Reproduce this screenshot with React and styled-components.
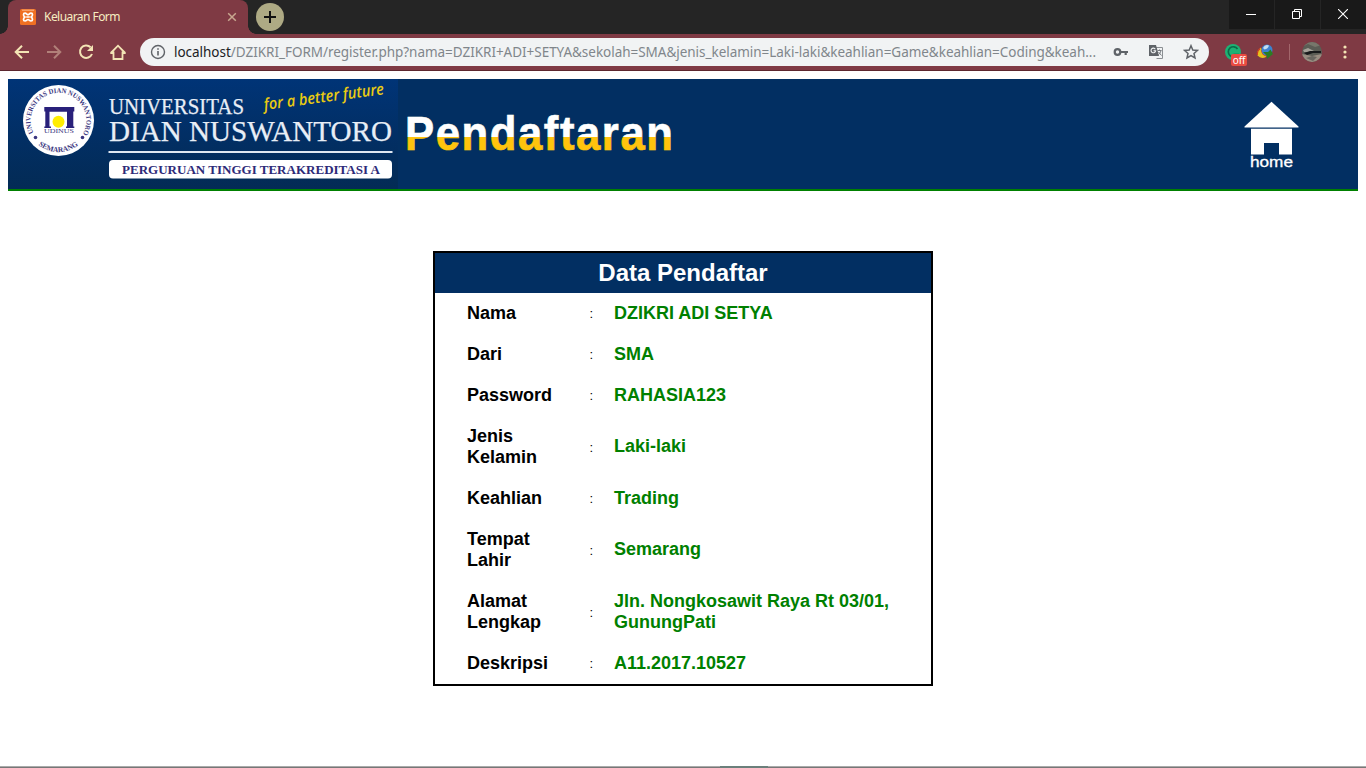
import React from "react";
import styled, { createGlobalStyle } from "styled-components";

const ui = `"Noto Sans", "Open Sans", sans-serif`;
const arial = `"Liberation Sans", Arial, sans-serif`;

const GlobalStyle = createGlobalStyle`
  * { box-sizing: border-box; }
  html, body { margin: 0; padding: 0; background: #fff; overflow: hidden; }
`;

const Window = styled.div`
  width: 1366px;
  height: 768px;
  display: flex;
  flex-direction: column;
  font-family: ${ui};
`;

const TabStrip = styled.div`
  height: 34px;
  flex: none;
  display: flex;
  align-items: flex-start;
  background: #252525;
  padding-left: 8px;
`;

const Tab = styled.div`
  width: 240px;
  height: 34px;
  position: relative;
  display: flex;
  align-items: center;
  padding: 0 11px 0 12px;
  background: #7f3a44;
  border-radius: 8px 8px 0 0;
  &::before, &::after {
    content: "";
    position: absolute;
    bottom: 0;
    width: 8px;
    height: 8px;
  }
  &::before { left: -8px; background: radial-gradient(circle at 0 0, transparent 7.5px, #7f3a44 8px); }
  &::after { right: -8px; background: radial-gradient(circle at 100% 0, transparent 7.5px, #7f3a44 8px); }
`;

const TabTitle = styled.span`
  flex: 1;
  margin-left: 8px;
  padding-bottom: 1px;
  font-size: 12px;
  letter-spacing: -0.55px;
  color: #f6ecc0;
  white-space: nowrap;
`;

const NewTab = styled.div`
  width: 28px;
  height: 28px;
  margin: 3px 0 0 8px;
  border-radius: 50%;
  background: #aeaa84;
  display: flex;
  align-items: center;
  justify-content: center;
`;

const Controls = styled.div`
  margin-left: auto;
  display: flex;
  gap: 1px;
`;

const Control = styled.div`
  width: 45px;
  height: 29px;
  padding: 0 1px 1px 0;
  background: #191919;
  display: flex;
  align-items: center;
  justify-content: center;
`;

const Toolbar = styled.div`
  height: 37px;
  flex: none;
  display: flex;
  align-items: center;
  background: #7f3a44;
  border-bottom: 1px solid #5c2730;
  padding: 0 19px 0 12px;
`;

const NavIcons = styled.div`
  display: flex;
  gap: 12px;
  width: 128px;
  svg { display: block; }
`;

const Omnibox = styled.div`
  width: 1069px;
  height: 28px;
  border-radius: 14px;
  background: #f1f3f4;
  display: flex;
  align-items: center;
  padding: 0 10px 0 9px;
`;

const Url = styled.div`
  width: 926px;
  margin-left: 7px;
  font-size: 13.5px;
  letter-spacing: -0.03px;
  white-space: nowrap;
  color: #80868b;
  b { font-weight: 400; color: #202124; }
`;

const BoxIcons = styled.div`
  margin-left: auto;
  display: flex;
  align-items: center;
  gap: 19px;
  svg { display: block; }
`;

const Extensions = styled.div`
  flex: 1;
  display: flex;
  align-items: center;
  margin-left: 15px;
  svg { display: block; }
`;

const ExtIcon = styled.div`
  position: relative;
  width: 18px;
  height: 18px;
  margin-right: 14px;
`;

const OffBadge = styled.span`
  position: absolute;
  left: 7px;
  top: 11px;
  width: 16px;
  height: 12px;
  border-radius: 2px;
  background: #ea4b41;
  color: #fff;
  font: 10px/12px ${ui};
  letter-spacing: -0.2px;
  text-align: center;
`;

const Divider = styled.div`
  width: 1px;
  height: 16px;
  margin: 0 12px 0 15px;
  background: #a2666b;
`;

const MenuIcon = styled.svg`
  margin-left: auto;
`;

const Page = styled.main`
  flex: 1;
  padding: 8px 8px 0;
  background: #fff;
  display: flex;
  flex-direction: column;
`;

const Header = styled.header`
  height: 112px;
  flex: none;
  display: flex;
  background: #022f62;
  border-bottom: 2px solid #008000;
  svg { display: block; overflow: visible; }
`;

const HomeLink = styled.a`
  margin-left: auto;
  margin-right: 56px;
`;

const Card = styled.section`
  width: 500px;
  margin: 60px auto 0;
  border: 2px solid #000;
  font-family: ${arial};
`;

const CardTitle = styled.h2`
  margin: 0;
  height: 40px;
  background: #022f62;
  color: #fff;
  font-size: 24px;
  line-height: 40px;
  text-align: center;
`;

const Row = styled.div`
  display: grid;
  grid-template-columns: 122px 25px 290px;
  align-items: center;
  padding: 10px 0 10px 32px;
  line-height: 21px;
`;

const Label = styled.div`
  width: 90px;
  font-size: 18px;
  font-weight: 700;
  color: #000;
`;

const Colon = styled.div`
  padding-left: 0.5px;
  font-size: 13px;
  color: #000;
`;

const Value = styled(Label)`
  width: auto;
  margin-top: -0.6px;
  color: #008000;
`;

const Taskbar = styled.div`
  height: 2px;
  flex: none;
  display: flex;
  justify-content: center;
  background: linear-gradient(#aaa 50%, #777 50%);
`;

const TaskbarActive = styled.div`
  width: 48px;
  margin-left: 122px;
  background: #6b7f7b;
`;

const rows = [
  ["Nama", "DZIKRI ADI SETYA"],
  ["Dari", "SMA"],
  ["Password", "RAHASIA123"],
  ["Jenis Kelamin", "Laki-laki"],
  ["Keahlian", "Trading"],
  ["Tempat Lahir", "Semarang"],
  ["Alamat Lengkap", "Jln. Nongkosawit Raya Rt 03/01, GunungPati"],
  ["Deskripsi", "A11.2017.10527"],
];

const XamppIcon = () => (
  <svg width="16" height="16" viewBox="0 0 16 16">
    <rect width="16" height="16" rx="1.500" fill="#f07023" />
    <path d="M2 1.200h12" stroke="#f9b88c" strokeWidth="1" />
    <path d="M5 4.200C3 4.200 3 7 5 8C3 9 3 12 5 12C6.500 12 7 10.500 8 10.500S9.500 12 11 12C13 12 13 9 11 8C13 7 13 4.200 11 4.200C9.500 4.200 9 5.700 8 5.700S6.500 4.200 5 4.200ZM6.200 8h3.600" fill="none" stroke="#fff" strokeWidth="1.700" strokeLinejoin="round" />
  </svg>
);

const NavBar = () => (
  <NavIcons>
    <svg width="20" height="20" viewBox="0 0 20 20" fill="none" stroke="#f3e4b5" strokeWidth="2"><path d="M17 10H4.500M10 3.700L3.700 10L10 16.300" /></svg>
    <svg width="20" height="20" viewBox="0 0 20 20" fill="none" stroke="#b18079" strokeWidth="2"><path d="M3 10H15.500M10 3.700L16.300 10L10 16.300" /></svg>
    <svg width="20" height="20" viewBox="0 0 20 20" fill="none" stroke="#f3e4b5" strokeWidth="2"><path d="M14.600 5.300A6.200 6.200 0 1 0 16 12" /><path d="M17 3V9H11Z" fill="#f3e4b5" stroke="none" /></svg>
    <svg width="20" height="20" viewBox="0 0 20 20" fill="none" stroke="#f3e4b5" strokeWidth="1.800"><path d="M5.500 9.500V17H14.500V9.500M2.300 11H5.500M14.500 11H17.700M2.800 11L10 3.700L17.200 11" /></svg>
  </NavIcons>
);

const UniversityLogo = () => (
  <svg width="390" height="110" viewBox="8 79 390 110">
    <defs>
      <linearGradient id="logoBg" x1="0" y1="0" x2="0" y2="1">
        <stop offset="0" stopColor="#003477" />
        <stop offset="0.5" stopColor="#022f65" />
        <stop offset="1" stopColor="#032b55" />
      </linearGradient>
      <path id="sealTop" d="M33.600 133A27.800 27.800 0 1 1 83.400 133" />
      <path id="sealBottom" d="M34.800 141.400A31.700 31.700 0 0 0 82.200 141.400" />
    </defs>
    <rect x="8" y="79" width="390" height="110" fill="url(#logoBg)" />
    <circle cx="58.500" cy="120.500" r="35.500" fill="#fff" />
    <g fill="#3a3680" fontFamily="Liberation Serif, serif" fontWeight="700">
      <text fontSize="7"><textPath href="#sealTop" textLength="114" lengthAdjust="spacingAndGlyphs">UNIVERSITAS DIAN NUSWANTORO</textPath></text>
      <text fontSize="7.500"><textPath href="#sealBottom" startOffset="5" textLength="43" lengthAdjust="spacing">SEMARANG</textPath></text>
      <text x="44" y="133.300" fontSize="6" fontWeight="400" textLength="30" lengthAdjust="spacingAndGlyphs">UDINUS</text>
      <circle cx="35.500" cy="137.500" r="1.800" />
      <circle cx="82.500" cy="137.500" r="1.800" />
    </g>
    <path d="M44.300 107H74.300V111.500H73.300V126.500H74.300V128H66V126.500H67V111.800H49.500V126.500H51V128H44.300V126.500H45.300V111.500H44.300Z" fill="#29207a" />
    <circle cx="58.500" cy="121.800" r="6" fill="#ffed00" />
    <g fill="#e8eef6" stroke="#e8eef6" strokeWidth="0.250" fontFamily="Liberation Serif, serif">
      <text x="109" y="114" fontSize="22.500" textLength="135" lengthAdjust="spacingAndGlyphs">UNIVERSITAS</text>
      <text x="109" y="140.500" fontSize="29.500" textLength="283" lengthAdjust="spacingAndGlyphs">DIAN NUSWANTORO</text>
    </g>
    <text transform="translate(264.500 110) rotate(-7.500)" fontFamily="Open Sans, sans-serif" fontStyle="italic" fontWeight="600" fontSize="16" fill="#e9cb12" textLength="121" lengthAdjust="spacingAndGlyphs">for a better future</text>
    <rect x="108.500" y="151" width="284" height="2" fill="#dfe7f1" />
    <rect x="109" y="160" width="283" height="18.500" rx="4" fill="#fff" />
    <text x="122" y="174" fontFamily="Liberation Serif, serif" fontWeight="700" fontSize="13" fill="#2d2a78" textLength="258" lengthAdjust="spacingAndGlyphs">PERGURUAN TINGGI TERAKREDITASI A</text>
  </svg>
);

const Wordmark = () => (
  <svg width="290" height="110" viewBox="398 79 290 110">
    <defs>
      <linearGradient id="split" gradientUnits="userSpaceOnUse" x1="0" y1="-70.500" x2="0" y2="39.500">
        <stop offset="0.527" stopColor="#fff" />
        <stop offset="0.527" stopColor="#ffc40d" />
      </linearGradient>
    </defs>
    <text transform="translate(405 149.500) scale(0.890 1)" fontFamily="Liberation Sans, sans-serif" fontWeight="700" fontSize="49" fill="url(#split)" stroke="url(#split)" strokeWidth="0.700" textLength="301" lengthAdjust="spacing">Pendaftaran</text>
  </svg>
);

const HomeIcon = () => (
  <svg width="58" height="110" viewBox="1244 79 58 110">
    <path d="M1271.500 101.700L1298.500 126.500V127.500H1244.500V126.500Z" fill="#fff" />
    <path d="M1251 128.700H1292V154.500H1279V143H1264V154.500H1251Z" fill="#fff" />
    <text x="1250" y="166.500" fontFamily="Liberation Sans, sans-serif" fontSize="15" fill="#fff" stroke="#fff" strokeWidth="0.300" textLength="43" lengthAdjust="spacingAndGlyphs">home</text>
  </svg>
);

export default function App() {
  return (
    <Window>
      <GlobalStyle />
      <TabStrip>
        <Tab>
          <XamppIcon />
          <TabTitle>Keluaran Form</TabTitle>
          <svg width="10" height="10" viewBox="0 0 10 10" stroke="#c8a890" strokeWidth="1.500"><path d="M1.200 1.200L8.800 8.800M8.800 1.200L1.200 8.800" /></svg>
        </Tab>
        <NewTab>
          <svg width="12" height="12" viewBox="0 0 12 12" stroke="#111" strokeWidth="2"><path d="M0 6H12M6 0V12" /></svg>
        </NewTab>
        <Controls>
          <Control><svg width="10" height="10" viewBox="0 0 10 10"><path d="M0 5.500H10" stroke="#fff" /></svg></Control>
          <Control><svg width="10" height="10" viewBox="0 0 10 10" fill="none" stroke="#fff"><path d="M.5 2.500H7.500V9.500H.5ZM2.500 2.500V.5H9.500V7.500H7.500" /></svg></Control>
          <Control><svg width="10" height="10" viewBox="0 0 10 10" stroke="#fff" strokeWidth="1.100"><path d="M0 0L10 10M10 0L0 10" /></svg></Control>
        </Controls>
      </TabStrip>
      <Toolbar>
        <NavBar />
        <Omnibox>
          <svg width="18" height="18" viewBox="0 0 18 18"><circle cx="9" cy="9" r="6.500" fill="none" stroke="#5f6368" strokeWidth="1.400" /><path d="M9 8V12.500M9 5.200V6.800" stroke="#5f6368" strokeWidth="1.600" /></svg>
          <Url><b>localhost</b>/DZIKRI_FORM/register.php?nama=DZIKRI+ADI+SETYA&amp;sekolah=SMA&amp;jenis_kelamin=Laki-laki&amp;keahlian=Game&amp;keahlian=Coding&amp;keah...</Url>
          <BoxIcons>
            <svg width="16" height="16" viewBox="0 0 16 16" fill="none" stroke="#5f6368" strokeWidth="2.200"><circle cx="4.500" cy="8" r="2.800" /><path d="M7 8H15M12.700 8V11" /></svg>
            <svg width="16" height="16" viewBox="0 0 16 16"><path d="M6 3.500H14.500V14.500H8.500" fill="none" stroke="#8b8f93" /><path d="M1 1H8L11 12H1Z" fill="#5f6368" /><path d="M7.300 5.200A2.300 2.300 0 1 0 7.600 6.800H5.500" fill="none" stroke="#f1f3f4" strokeWidth="1.100" /><path d="M9.500 6.500H13.500M11.500 5.500V6.500M13 6.500C12.500 9 11 10.500 10 11M10.500 8L13.500 11.500" fill="none" stroke="#777b80" /></svg>
            <svg width="16" height="16" viewBox="0 0 16 16"><path d="M8 1.700L9.800 6L14.500 6.400L11 9.500L12 14L8 11.600L4 14L5 9.500L1.500 6.400L6.200 6Z" fill="none" stroke="#5f6368" strokeWidth="1.500" /></svg>
          </BoxIcons>
        </Omnibox>
        <Extensions>
          <ExtIcon>
            <svg width="18" height="18" viewBox="0 0 18 18"><circle cx="9" cy="9" r="8" fill="#1db274" /><path d="M13.500 6A5 5 0 1 0 13.500 11.500H9.500" fill="none" stroke="#0a6d4a" strokeWidth="1.700" /></svg>
            <OffBadge>off</OffBadge>
          </ExtIcon>
          <svg width="18" height="18" viewBox="0 0 18 18"><path d="M5 4.500Q0 8 1.500 12.500Q5 16.500 10 14L11 11Q6 10 5 4.500Z" fill="#e5c31c" /><path d="M4.200 5.500Q.5 8 1.500 12" fill="none" stroke="#c73a24" strokeWidth="1.300" /><path d="M5.500 7Q6 12 11 13" fill="none" stroke="#d4421f" strokeWidth="1.300" /><circle cx="11" cy="7" r="5.500" fill="#3c82d0" /><path d="M7 5Q9 1 13 2.500Q12 6 8.500 6.500Z" fill="#c4def0" /><path d="M7 9L12 9L14.500 6.500L17 11L11 16L10.500 12.500Z" fill="#2a7d23" /></svg>
          <Divider />
          <svg width="20" height="20" viewBox="0 0 20 20"><defs><clipPath id="avatar"><circle cx="10" cy="10" r="10" /></clipPath></defs><g clipPath="url(#avatar)"><rect width="20" height="20" fill="#5b5d55" /><path d="M0 5L6 2L13 5L20 3V0H0Z" fill="#77776b" /><path d="M1 8L6 6L12 9L9 10L2 10Z" fill="#a5a299" /><path d="M2 11L8 9L19 9V11L11 11L5 13Z" fill="#181a1b" /><path d="M0 12L5 13L10 14L20 12V20H0Z" fill="#9a8e82" /><path d="M4 16L10 14L15 15L11 19Z" fill="#696760" /></g></svg>
          <MenuIcon width="4" height="16" viewBox="0 0 4 16" fill="#f3e4b5"><circle cx="2" cy="3" r="1.600" /><circle cx="2" cy="8" r="1.600" /><circle cx="2" cy="13" r="1.600" /></MenuIcon>
        </Extensions>
      </Toolbar>
      <Page>
        <Header>
          <UniversityLogo />
          <Wordmark />
          <HomeLink><HomeIcon /></HomeLink>
        </Header>
        <Card>
          <CardTitle>Data Pendaftar</CardTitle>
          {rows.map(([label, value]) => (
            <Row key={label}>
              <Label>{label}</Label>
              <Colon>:</Colon>
              <Value>{value}</Value>
            </Row>
          ))}
        </Card>
      </Page>
      <Taskbar><TaskbarActive /></Taskbar>
    </Window>
  );
}
